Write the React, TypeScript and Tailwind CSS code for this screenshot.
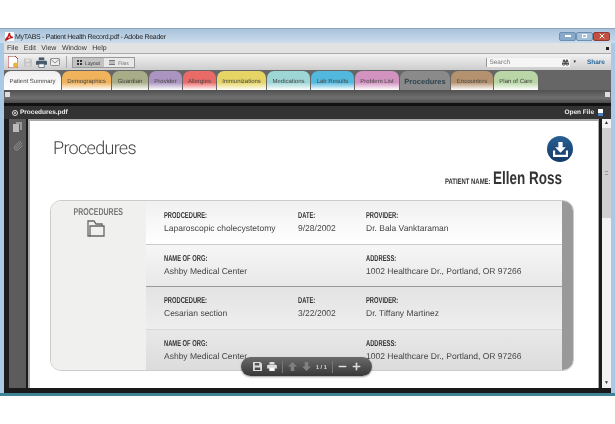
import type { ReactNode } from "react";
import { Binoculars, Minus, Paperclip, Plus, X } from "lucide-react";

const tabs = [
  { name: "Patient Summary", w: "w-[57px]", cls: "bg-[linear-gradient(#efefef,#ffffff)]" },
  { name: "Demographics", w: "w-[49px]", cls: "bg-[linear-gradient(#f0b25a_60%,#fff)]" },
  { name: "Guardian", w: "w-[36px]", cls: "bg-[linear-gradient(#a8ad88_60%,#fff)]" },
  { name: "Provider", w: "w-[33px]", cls: "bg-[linear-gradient(#ab94c0_60%,#fff)]" },
  { name: "Allergies", w: "w-[33px]", cls: "bg-[linear-gradient(#ea6a68_60%,#fff)]" },
  { name: "Immunizations", w: "w-[49px]", cls: "bg-[linear-gradient(#e6d565_60%,#fff)]" },
  { name: "Medications", w: "w-[43px]", cls: "bg-[linear-gradient(#9ed6d6_60%,#fff)]" },
  { name: "Lab Results", w: "w-[43px]", cls: "bg-[linear-gradient(#52b8de_60%,#fff)]" },
  { name: "Problem List", w: "w-[44px]", cls: "bg-[linear-gradient(#d393c0_60%,#fff)]" },
  { name: "Procedures", w: "w-[50px]", cls: "bg-[#8a8a8a]", active: true },
  { name: "Encounters", w: "w-[42px]", cls: "bg-[linear-gradient(#b5926f_60%,#fff)]" },
  { name: "Plan of Care", w: "w-[44px]", cls: "bg-[linear-gradient(#b9d6a6_60%,#fff)]" },
];

function FloppyIcon({ className }: { className: string }) {
  return (
    <svg viewBox="0 0 10 10" className={className} fill="currentColor">
      <path fillRule="evenodd" d="M0 0h8l2 2v8H0zM2 1v3h5V1zM2 6v3h6V6z" />
    </svg>
  );
}

function PrinterIcon({ className }: { className: string }) {
  return (
    <svg viewBox="0 0 12 11" className={className} fill="currentColor">
      <path d="M3 0h6v3H3z" />
      <path d="M1.5 3.5h9Q12 3.5 12 5v3H0V5q0-1.500 1.500-1.500z" />
      <path d="M3 7h6v4H3z" fill="#fff" stroke="currentColor" strokeWidth=".8" />
    </svg>
  );
}

function ArrowIcon({ down, className }: { down?: boolean; className: string }) {
  return (
    <svg viewBox="0 0 10 10" className={className} fill="currentColor">
      <path d={down ? "M3 0h4v5h3L5 10 0 5h3z" : "M3 10h4V5h3L5 0 0 5h3z"} />
    </svg>
  );
}

function Label({ children }: { children: ReactNode }) {
  return (
    <div className="text-[8.5px] leading-[10px] font-bold text-[#333] origin-left scale-x-[.68] whitespace-nowrap">
      {children}
    </div>
  );
}

function Value({ children }: { children: ReactNode }) {
  return <div className="mt-[2px] text-[8.5px] leading-[13px] text-[#444] whitespace-nowrap">{children}</div>;
}

function Row({ a, b, c, d, e, f, cls }: { a: string; b: string; c?: string; d?: string; e: string; f: string; cls: string }) {
  return (
    <div className={`flex pl-[18px] ${cls}`}>
      <div className="w-[134px]">
        <Label>{a}</Label>
        <Value>{b}</Value>
      </div>
      <div className="w-[68px]">
        {c && <Label>{c}</Label>}
        {d && <Value>{d}</Value>}
      </div>
      <div>
        <Label>{e}</Label>
        <Value>{f}</Value>
      </div>
    </div>
  );
}

export default function App() {
  return (
    <div className="relative w-[615px] h-[424px] bg-white pt-[28px] font-['Liberation_Sans',sans-serif] overflow-hidden [text-rendering:geometricPrecision] blur-[0.3px]">
      <div className="w-[615px] h-[368px] flex flex-col border-t border-t-[#8aa5bd] border-b-[3px] border-b-[#3f8296] bg-[linear-gradient(90deg,#a9c9e6,#c3d8ea_50%,#a9c9e6)] px-[4px]">
        {/* Title bar */}
        <div className="h-[14px] -mx-[4px] flex items-center pl-[5px] pr-[5px] bg-[linear-gradient(#a9c3dc,#cbdcec)]">
          <svg viewBox="0 0 10 10" className="w-[9px] h-[9px]">
            <rect width="10" height="10" fill="#fff" />
            <path d="M1 8Q4 6 5 1Q5 6 9 6Q5 6 1 9z" fill="none" stroke="#c01818" strokeWidth="1.600" />
          </svg>
          <span className="ml-[1px] text-[7px] leading-none tracking-[-.28px] text-[#222] translate-y-px">MyTABS - Patient Health Record.pdf - Adobe Reader</span>
          <div className="ml-auto flex">
            <div className="w-[17px] h-[9px] rounded-[2px] bg-[#88a9ca] border border-[#6d8fb0] flex items-center justify-center"><div className="w-[6px] h-[2px] bg-white" /></div>
            <div className="w-[17px] h-[9px] rounded-[2px] bg-[#a3bfd9] border border-[#6d8fb0] flex items-center justify-center"><div className="w-[5px] h-[4px] border border-white" /></div>
            <div className="w-[17px] h-[9px] rounded-[2px] bg-[#c4503f] border border-[#8f3a34] flex items-center justify-center"><X size={8} strokeWidth={3} className="text-white" /></div>
          </div>
        </div>
        {/* Menu bar */}
        <div className="h-[10px] flex items-center gap-[5.5px] pl-[3px] pr-[2px] pt-[1px] bg-[#e2e2e2] text-[7px] leading-none text-[#333]">
          <span>File</span>
          <span>Edit</span>
          <span>View</span>
          <span>Window</span>
          <span>Help</span>
          <div className="ml-auto w-[3px] h-[3px] bg-[#222]" />
        </div>
        {/* Toolbar */}
        <div className="h-[17px] flex items-center pl-[4px] pr-[6px] bg-[linear-gradient(#f2f2f2,#cdcdcd)] border-t border-[#aaa]">
          <svg viewBox="0 0 10 12" className="w-[10px] h-[12px]">
            <path d="M0 0h7l3 3v9H0z" fill="#fff" stroke="#a33" strokeWidth="1" />
            <circle cx="7.500" cy="9" r="2.500" fill="#e8b43a" />
          </svg>
          <FloppyIcon className="ml-[6px] w-[8px] h-[9px] text-[#c4c4c4]" />
          <PrinterIcon className="ml-[4px] w-[11px] h-[11px] text-[#46586a]" />
          <svg viewBox="0 0 10 8" className="ml-[3px] w-[10px] h-[8px]" fill="#eee" stroke="#777" strokeWidth=".8">
            <rect x=".5" y=".5" width="9" height="7" rx="1" />
            <path d="M.5 1 5 5l4.500-4" fill="none" />
          </svg>
          <div className="ml-[6px] h-[12px] w-px bg-[#aaa]" />
          <div className="ml-[5px] flex h-[11px] border border-[#999]">
            <div className="w-[31px] bg-[#c2c2c2] flex items-center justify-center gap-[3px] text-[5px] leading-none text-[#333]">
              <div className="grid grid-cols-2 gap-[1px]">
                <div className="w-[2px] h-[2px] bg-[#333]" />
                <div className="w-[2px] h-[2px] bg-[#333]" />
                <div className="w-[2px] h-[2px] bg-[#333]" />
                <div className="w-[2px] h-[2px] bg-[#333]" />
              </div>
              <span className="translate-y-[1.5px]">Layout</span>
            </div>
            <div className="w-[30px] bg-[#e8e8e8] flex items-center justify-center gap-[3px] text-[5px] leading-none text-[#666]">
              <div className="w-[6px] h-[5px] border-y border-[#777] bg-[#bbb]" />
              <span className="translate-y-[1.5px]">Files</span>
            </div>
          </div>
          <div className="ml-auto w-[84px] h-[9px] bg-[#f5f5f5] border-l border-[#999] flex items-center justify-between pl-[2px] text-[6.5px] leading-none text-[#777]">
            <span className="translate-y-px">Search</span>
            <Binoculars size={7} strokeWidth={3} className="text-[#333] mr-[1px]" />
          </div>
          <span className="ml-[3px] text-[5px] leading-none text-[#333]">▾</span>
          <span className="ml-[11px] text-[6.5px] leading-none font-bold text-[#2e6b9e] translate-y-px">Share</span>
        </div>
        {/* Tabs */}
        <div className="h-[20px] flex items-end gap-[1px] bg-[#666]">
          {tabs.map((t) => (
            <div
              key={t.name}
              className={`h-[19px] pt-[2px] ${t.w} ${t.cls} rounded-t-[7px] flex items-center justify-center leading-none whitespace-nowrap ${
                t.active ? "text-[7.5px] font-bold text-[#2f4450]" : "text-[6px] text-[#444]"
              }`}
            >
              {t.name}
            </div>
          ))}
        </div>
        {/* Splitter strip */}
        <div className="h-[13px] bg-[linear-gradient(#505050,#707070_60%,#4a4a4a)] flex items-start justify-between pt-[2px] px-px">
          <div className="w-[5px] h-[5px] bg-[#ddd]" />
          <div className="w-[5px] h-[5px] bg-[#ddd]" />
        </div>
        {/* Reader */}
        <div className="flex-1 min-h-0 flex flex-col bg-[#1c1c1c]">
          <div className="h-[3px] bg-[#111]" />
          <div className="h-[13px] flex items-center pl-[8px] pr-[8px] bg-[#333] text-[#eee] text-[6.5px] leading-none font-bold">
            <div className="w-[6px] h-[6px] rounded-full border border-[#ddd] mr-[2px] flex items-center justify-center">
              <X size={4} strokeWidth={4} />
            </div>
            <span className="translate-y-px">Procedures.pdf</span>
            <span className="ml-auto translate-y-px">Open File</span>
            <div className="ml-[4px] w-[5px] h-[7px] bg-[linear-gradient(#fff_50%,#4a7fc0_50%)]" />
          </div>
          <div className="flex-1 min-h-0 flex">
            <div className="ml-[5px] w-[17px] bg-[#5c5c5c] flex flex-col items-center gap-[9px] pt-[3px]">
              <svg viewBox="0 0 9 10" className="w-[9px] h-[10px]" fill="#bbb">
                <path d="M0 2h6v8H0z" />
                <path d="M3 0h6v8H7V2H3z" fill="#999" />
              </svg>
              <Paperclip size={10} className="text-[#999]" />
            </div>
            <div className="w-[2px]" />
            <div className="flex-1 min-w-0 bg-white border-[2px] border-[#aaa] border-b-0 border-r-[1px] pl-[20px]">
              <div className="relative h-[79px] w-[524px]">
                <div className="ml-[3px] pt-[16px] text-[18px] leading-[24px] font-['Roboto',sans-serif] font-light text-[#444] tracking-[-.7px]">Procedures</div>
                <div className="absolute right-[1px] top-[15px] w-[26px] h-[26px] rounded-full bg-[linear-gradient(#2a5f94,#123a66)] flex items-center justify-center">
                  <svg viewBox="0 0 14 14" className="w-[15px] h-[15px]" fill="#fff">
                    <path d="M5 0h4v5h3L7 10 2 5h3z" />
                    <path d="M0 8h2v4h10V8h2v6H0z" />
                  </svg>
                </div>
                <div className="absolute right-[12px] top-[48px] flex items-baseline">
                  <span className="text-[8px] font-bold text-[#333] scale-x-[.74] origin-right whitespace-nowrap">PATIENT NAME:</span>
                  <span className="ml-[3px] w-[69px] text-[18px] leading-[18px] font-bold text-[#333] whitespace-nowrap">
                    <span className="inline-block origin-left scale-x-[.75]">Ellen Ross</span>
                  </span>
                </div>
              </div>
              <div className="h-[171px] w-[524px] flex rounded-[11px] border border-[#ccc] overflow-hidden">
                <div className="w-[95px] bg-[#f0f0ef] flex flex-col items-center pt-[6px]">
                  <div className="text-[10px] leading-[11px] font-bold text-[#777] scale-x-[.7] whitespace-nowrap">PROCEDURES</div>
                  <svg viewBox="0 0 18 17" className="mt-[2px] mr-[5px] w-[18px] h-[17px]" fill="none" stroke="#666" strokeWidth="1.300">
                    <path d="M3 16H1V1h6l2 3h6v2" />
                    <path d="M3 16V6h14v10z" />
                  </svg>
                </div>
                <div className="w-[416px] flex flex-col">
                  <Row cls="h-[44px] pt-[9px] bg-[linear-gradient(#f0f0f0,#ffffff)] border-b border-[#ccc]" a="PRODCEDURE:" b="Laparoscopic cholecystetomy" c="DATE:" d="9/28/2002" e="PROVIDER:" f="Dr. Bala Vanktaraman" />
                  <Row cls="h-[42px] pt-[8px] bg-[linear-gradient(#f6f6f6,#e8e8e8)] border-b border-[#999]" a="NAME OF ORG:" b="Ashby Medical Center" e="ADDRESS:" f="1002 Healthcare Dr., Portland, OR 97266" />
                  <Row cls="h-[43px] pt-[8px] bg-[linear-gradient(#e3e3e3,#eeeeee)] border-b border-[#d8d8d8]" a="PRODCEDURE:" b="Cesarian section" c="DATE:" d="3/22/2002" e="PROVIDER:" f="Dr. Tiffany Martinez" />
                  <Row cls="flex-1 pt-[8px] bg-[linear-gradient(#e8e8e8,#dcdcdc)]" a="NAME OF ORG:" b="Ashby Medical Center" e="ADDRESS:" f="1002 Healthcare Dr., Portland, OR 97266" />
                </div>
                <div className="flex-1 bg-[#999]" />
              </div>
            </div>
            <div className="w-[3px]" />
            <div className="w-[9px] bg-[#f2f2f2] flex flex-col">
              <div className="h-[9px] text-[5px] leading-[9px] text-center text-[#333]">▲</div>
              <div className="h-[90px] bg-[#cfcfcf] flex items-center justify-center">
                <div className="w-[3px] h-[4px] border-y border-[#999]" />
              </div>
              <div className="mt-auto h-[9px] text-[5px] leading-[9px] text-center text-[#333]">▼</div>
            </div>
          </div>
          <div className="h-[5px] bg-[#1a1a1a]" />
        </div>
      </div>
      {/* floating page controls */}
      <div className="absolute left-[241px] top-[357px] w-[131px] h-[19px] rounded-full bg-[linear-gradient(#6a6a6a,#383838)] shadow-[0_1px_2px_#0006] flex items-center pl-[12px] text-[#ddd]">
        <FloppyIcon className="w-[9px] h-[9px]" />
        <PrinterIcon className="ml-[5px] w-[10px] h-[9px] text-[#ddd]" />
        <div className="ml-[5px] w-px h-[12px] bg-[#777]" />
        <ArrowIcon className="ml-[5px] w-[9px] h-[9px] text-[#808080]" />
        <ArrowIcon down className="ml-[5px] w-[9px] h-[9px] text-[#808080]" />
        <span className="ml-[5px] text-[5.5px] leading-none font-bold whitespace-nowrap translate-y-[1.5px]">1 / 1</span>
        <div className="ml-[5px] w-px h-[12px] bg-[#777]" />
        <Minus size={11} strokeWidth={3.500} className="ml-[4px]" />
        <Plus size={11} strokeWidth={3.500} className="ml-[3px]" />
      </div>
    </div>
  );
}
